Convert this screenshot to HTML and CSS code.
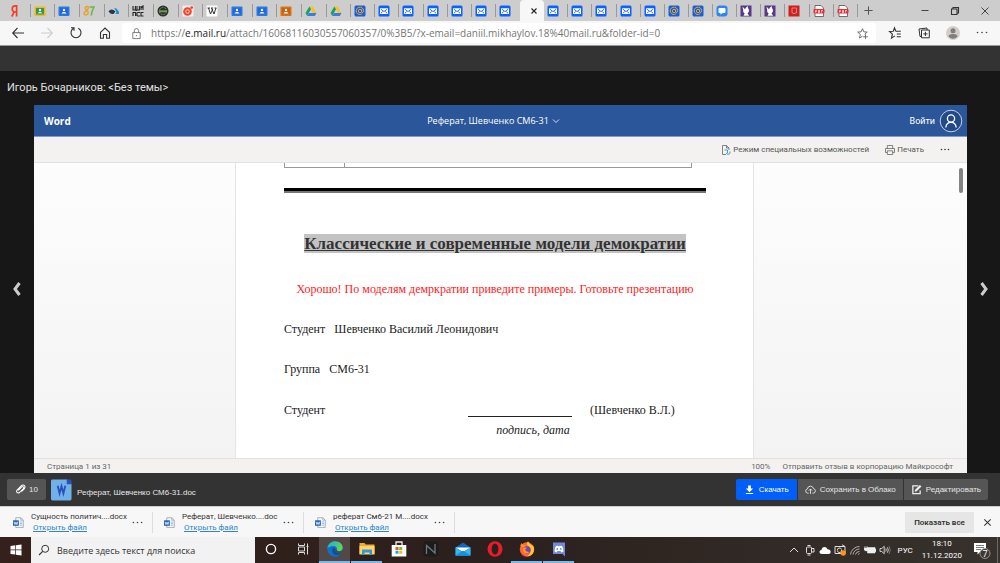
FILE: index.html
```html
<!DOCTYPE html>
<html lang="ru">
<head>
<meta charset="utf-8">
<title>Реферат, Шевченко СМ6-31</title>
<link rel="stylesheet" href="styles.css">
</head>
<body>
<svg class="sprite" aria-hidden="true">
  <symbol id="i-ya" viewBox="0 0 12 12"><path d="M7.600 11.500V.9H6.200C4.200.9 3.200 2.200 3.200 3.900c0 1.400.7 2.300 1.900 3L2.800 11.500M7.600 7H5.600" fill="none" stroke="#f33b2a" stroke-width="1.700"/></symbol>
  <symbol id="i-class-g" viewBox="0 0 12 12"><rect x=".5" y="1.500" width="11" height="9.500" rx="1" fill="#f4b912"/><rect x="2" y="3" width="8" height="6.500" fill="#2f9a56"/><circle cx="6" cy="5" r="1.200" fill="#fff"/><path d="M3.500 8.300q2.500-2.600 5 0z" fill="#fff"/></symbol>
  <symbol id="i-class-b" viewBox="0 0 12 12"><rect x=".5" y="1.500" width="11" height="9.500" rx="1" fill="#2a79e4"/><rect x="2" y="3" width="8" height="6.500" fill="#1f68dd"/><circle cx="6" cy="5" r="1.200" fill="#fff"/><path d="M3.300 8.400q2.700-2.900 5.400 0z" fill="#fff"/></symbol>
  <symbol id="i-class-o" viewBox="0 0 12 12"><rect x=".5" y="1.500" width="11" height="9.500" rx="1" fill="#dc7016"/><rect x="2" y="3" width="8" height="6.500" fill="#c9600c"/><circle cx="6" cy="5" r="1.200" fill="#fff"/><path d="M3.300 8.400q2.700-2.900 5.400 0z" fill="#fff"/></symbol>
  <symbol id="i-87" viewBox="0 0 12 12"><g fill="none" stroke-width="1.500"><path d="M5.600 2.200C4 .7 1.600 2 2.300 3.800c.5 1.200 2.800 1.700 2.900 3.800.1 2.400-4 3.300-4.200.8C.9 6.200 5.700 5.300 5.600 2.200z" stroke="#ef9f25"/><path d="M6.800 2H11C9.600 4.500 8.500 7 8.200 10.500" stroke="#66b645"/></g></symbol>
  <symbol id="i-steam" viewBox="0 0 12 12"><path d="M.5 6.500q2-3 5-1.500l2 1.500-2 2.500q-3 .5-5-2.500z" fill="#263747"/><path d="M6 3.500q3-1 3.500 1.500Q11.500 6 11 9H7.200Q10 7 6 3.500z" fill="#1c8ed0"/></symbol>
  <symbol id="i-cyr" viewBox="0 0 12 12"><g fill="none" stroke="#222" stroke-width="1.100"><path d="M1 1v4h2.400V1M3.400 5h.8v1M5 1v4h2.400V1M9 1v4M9 5V3l2-2v4M1 11V7.500h2.600V11M5 11V7.500M8 7.500H5.300M8 11H5.300M11.500 7.500H9V11h2.500"/></g></symbol>
  <symbol id="i-round" viewBox="0 0 12 12"><circle cx="6" cy="6" r="5.500" fill="#2c332e"/><circle cx="6" cy="6" r="3.600" fill="none" stroke="#8b9a86" stroke-width=".8" stroke-dasharray="2 1"/><path d="M2 6.300h8" stroke="#6fa047" stroke-width="2"/></symbol>
  <symbol id="i-red" viewBox="0 0 12 12"><rect x=".5" y=".5" width="11" height="11" rx="1" fill="#f7efed"/><circle cx="5.500" cy="6.500" r="4.300" fill="#f0442f"/><circle cx="5.500" cy="6.500" r="1.800" fill="none" stroke="#ffd7d0"/><circle cx="9.700" cy="2.600" r="1.400" fill="#f0442f"/></symbol>
  <symbol id="i-wiki" viewBox="0 0 12 12"><rect x=".5" y=".5" width="11" height="11" rx="1" fill="#fff"/><path d="M1.500 3H4M5 3h2.200M8.500 3h2M2.500 3l2 6L6.800 4M5.500 3l2.500 6 2-6" fill="none" stroke="#222" stroke-width=".9"/></symbol>
  <symbol id="i-drive" viewBox="0 0 12 12"><path d="M4.300 1.500h3.200L11.500 8H8.300z" fill="#fbc11e"/><path d="M4.300 1.500 6 4.300 2.200 11 .5 8z" fill="#18a25d"/><path d="M4 8h7.500L9.800 11H2.200z" fill="#397be8"/></symbol>
  <symbol id="i-at" viewBox="0 0 12 12"><rect x=".5" y=".5" width="11" height="11" rx="1.500" fill="#1260e5"/><g fill="none" stroke="#eaa422" stroke-width="1"><circle cx="6" cy="6" r="1.700"/><path d="M7.700 4.300v2.500q.2 1 1.100.8.900-.6.800-2a3.700 3.700 0 1 0-1.400 3.100"/></g></symbol>
  <symbol id="i-mail" viewBox="0 0 12 12"><rect x=".5" y=".5" width="11" height="11" rx="1.500" fill="#0a62ff"/><rect x="2" y="3.200" width="8" height="5.800" rx=".5" fill="#fff"/><path d="m3 4.300 3 2.300 3-2.300M3 8.200l1.800-1.700M9 8.200 7.200 6.500" fill="none" stroke="#0a62ff" stroke-width=".9"/></symbol>
  <symbol id="i-chat" viewBox="0 0 12 12"><rect x=".5" y=".5" width="11" height="11" rx="3" fill="#2787f5"/><path d="M3.500 3h5q1 0 1 1v3q0 1-1 1H6.500L4.500 9.800V8h-1q-1 0-1-1V4q0-1 1-1z" fill="#fff"/></symbol>
  <symbol id="i-bird" viewBox="0 0 12 12"><rect x=".5" y=".5" width="11" height="11" fill="#573987"/><path d="M2.500 2q1.800.8 2.500 2.500Q5.500 2 8 1q-.6 1.500.3 2.500Q10 6 7.500 8.500l1.700 2.200H3.500L4.700 8.500Q2.500 7 3.200 5z" fill="#fff"/></symbol>
  <symbol id="i-crest" viewBox="0 0 12 12"><rect x=".5" y=".5" width="11" height="11" fill="#d0201e"/><path d="M4 3h4.500v5H6.800L6 9l-.8-1H4z" fill="none" stroke="#f1a5a0" stroke-width=".7"/></symbol>
  <symbol id="i-pdf" viewBox="0 0 12 12"><path d="M2 .5h6l2.500 2.500v8.500H2z" fill="#fff" stroke="#554d4d" stroke-width=".8"/><rect x=".5" y="4" width="11" height="4.500" rx="1" fill="#ee2d35"/><path d="M2.500 7.500v-2h1v1h-1M5.500 7.500v-2h1v2zM8.500 7.500v-2H10" fill="none" stroke="#fff" stroke-width=".7"/></symbol>
  <symbol id="i-doc" viewBox="0 0 12 12"><path d="M3 .8h5.500l2.700 2.600v8H3z" fill="#f6f8fc" stroke="#93999f" stroke-width=".8"/><path d="M8.500.8v2.700h2.700M7.500 5.500H10M7.500 7.200H10M7.500 9H10" fill="none" stroke="#7da7df" stroke-width=".8"/><rect x="0" y="3.600" width="6.400" height="6" fill="#2862b9"/><path d="m1.200 5.200.9 3 1.100-2.600 1.100 2.600.9-3" fill="none" stroke="#fff" stroke-width=".8"/></symbol>
</svg>

<header class="browser">
  <div class="tabstrip">
    <nav class="tabs" aria-label="Вкладки">
      <button class="tab early"><svg><use href="#i-ya"/></svg></button>
      <button class="tab early"><svg><use href="#i-class-g"/></svg></button>
      <button class="tab early"><svg><use href="#i-class-b"/></svg></button>
      <button class="tab early"><svg><use href="#i-87"/></svg></button>
      <button class="tab early"><svg><use href="#i-steam"/></svg></button>
      <button class="tab early"><svg><use href="#i-cyr"/></svg></button>
      <button class="tab early"><svg><use href="#i-round"/></svg></button>
      <button class="tab early"><svg><use href="#i-red"/></svg></button>
      <button class="tab early"><svg><use href="#i-wiki"/></svg></button>
      <button class="tab early"><svg><use href="#i-class-b"/></svg></button>
      <button class="tab early"><svg><use href="#i-class-b"/></svg></button>
      <button class="tab early"><svg><use href="#i-class-o"/></svg></button>
      <button class="tab early"><svg><use href="#i-drive"/></svg></button>
      <button class="tab early"><svg><use href="#i-drive"/></svg></button>
      <button class="tab"><svg><use href="#i-at"/></svg></button>
      <button class="tab"><svg><use href="#i-mail"/></svg></button>
      <button class="tab"><svg><use href="#i-mail"/></svg></button>
      <button class="tab"><svg><use href="#i-mail"/></svg></button>
      <button class="tab"><svg><use href="#i-mail"/></svg></button>
      <button class="tab"><svg><use href="#i-mail"/></svg></button>
      <button class="tab last"><svg><use href="#i-mail"/></svg></button>
      <button class="tab active" aria-label="Закрыть вкладку"><svg viewBox="0 0 12 12"><path d="m3.500 3.500 5 5M8.500 3.500l-5 5" stroke="#222" stroke-width="1.100"/></svg></button>
      <button class="tab"><svg><use href="#i-mail"/></svg></button>
      <button class="tab"><svg><use href="#i-mail"/></svg></button>
      <button class="tab"><svg><use href="#i-mail"/></svg></button>
      <button class="tab"><svg><use href="#i-mail"/></svg></button>
      <button class="tab"><svg><use href="#i-mail"/></svg></button>
      <button class="tab"><svg><use href="#i-at"/></svg></button>
      <button class="tab"><svg><use href="#i-at"/></svg></button>
      <button class="tab"><svg><use href="#i-chat"/></svg></button>
      <button class="tab"><svg><use href="#i-bird"/></svg></button>
      <button class="tab"><svg><use href="#i-bird"/></svg></button>
      <button class="tab"><svg><use href="#i-crest"/></svg></button>
      <button class="tab"><svg><use href="#i-pdf"/></svg></button>
      <button class="tab"><svg><use href="#i-pdf"/></svg></button>
    </nav>
    <button class="newtab" aria-label="Новая вкладка"><svg viewBox="0 0 12 12"><path d="M6 1.500v9M1.500 6h9" stroke="#555" stroke-width="1.100"/></svg></button>
    <div class="winctl">
      <button aria-label="Свернуть"><svg viewBox="0 0 12 12"><path d="M2.500 5.500h7" stroke="#444"/></svg></button>
      <button aria-label="Развернуть"><svg viewBox="0 0 12 12"><path d="M2.500 4h5.500v5.500H2.500zM4 4V2.500h5.500V8H8" fill="none" stroke="#333" stroke-width="1.100"/></svg></button>
      <button aria-label="Закрыть"><svg viewBox="0 0 12 12"><path d="m2.500 2.500 7 7M9.500 2.500l-7 7" stroke="#444"/></svg></button>
    </div>
  </div>
  <div class="navbar">
    <button class="nav" aria-label="Назад"><svg viewBox="0 0 14 14"><path d="M13 7H2M6.500 2 1.700 7l4.800 5" fill="none" stroke="#333" stroke-width="1.100"/></svg></button>
    <button class="nav" aria-label="Вперёд"><svg viewBox="0 0 14 14"><path d="M1 7h11M7.500 2l4.800 5-4.800 5" fill="none" stroke="#ccc" stroke-width="1.100"/></svg></button>
    <button class="nav" aria-label="Обновить"><svg viewBox="0 0 14 14"><path d="M9.300 2.300A5 5 0 1 1 4.700 2.300M2 1.700h3v3" fill="none" stroke="#333" stroke-width="1.100"/></svg></button>
    <button class="nav" aria-label="Домой"><svg viewBox="0 0 14 14"><path d="M2.500 6.300 7 2l4.500 4.300v6H8.600V8.500H5.400v3.800H2.500z" fill="none" stroke="#333" stroke-width="1.100"/></svg></button>
    <div class="address">
      <svg viewBox="0 0 14 14"><path d="M3 6h8v6.500H3zM4.700 6V4a2.300 2.300 0 0 1 4.600 0v2" fill="none" stroke="#777"/><circle cx="7" cy="9.200" r=".7" fill="#777"/></svg>
      <div class="url">https://<b>e.mail.ru</b>/attach/16068116030557060357/0%3B5/?x-email=daniil.mikhaylov.18%40mail.ru&amp;folder-id=0</div>
      <svg viewBox="0 0 14 14"><path d="m7 1.800 1.400 3.400 3.700.3-2.800 2.400M7 9.900l-3.200 2 .9-3.900-2.900-2.500 3.700-.3L7 1.800M10.200 8v5M7.700 10.500h5" fill="none" stroke="#666"/></svg>
    </div>
    <button class="tool" aria-label="Избранное"><svg viewBox="0 0 14 14"><path d="M7.800 5.200h5M8.800 8h4M8.800 10.800h4M7 9.900l-3.500 2.200.9-4L1.500 5.500l3.800-.3L6.500 1.800l1.300 3.400" fill="none" stroke="#333" stroke-width="1.100"/></svg></button>
    <button class="tool" aria-label="Коллекции"><svg viewBox="0 0 14 14"><path d="M4.500 4h7.800v7.800H4.500zM8.400 5.800V10M6.300 7.900h4.200M10 4V2L2 3l1 7.500h1.500" fill="none" stroke="#333"/></svg></button>
    <button class="tool" aria-label="Профиль"><svg viewBox="0 0 14 14"><circle cx="7" cy="7" r="7" fill="#d2cfcb"/><circle cx="7" cy="4.700" r="2.500" fill="#827e7b"/><path d="M2.500 10.500Q2.500 8 7 8t4.500 2.500Q7 15 2.500 10.500z" fill="#827e7b"/></svg></button>
    <button class="tool" aria-label="Меню"><svg viewBox="0 0 14 14"><g fill="#444"><circle cx="2.500" cy="6.500" r=".8"/><circle cx="7" cy="6.500" r=".8"/><circle cx="11.500" cy="6.500" r=".8"/></g></svg></button>
  </div>
</header>

<main class="viewer">
  <h1 class="subject">Игорь Бочарников: &lt;Без темы&gt;</h1>
  <div class="stage">
    <button class="arrow" aria-label="Предыдущий"><svg viewBox="0 0 10 16"><path d="M7.500 2 3 8l4.500 6" fill="none" stroke="#ccc" stroke-width="3"/></svg></button>
    <section class="word">
      <div class="word-head">
        <strong>Word</strong>
        <button class="doc-name">Реферат, Шевченко СМ6-31 <svg viewBox="0 0 8 8"><path d="m1 2.500 3 3 3-3" fill="none" stroke="#fff" stroke-width=".8"/></svg></button>
        <button class="signin">Войти <svg viewBox="0 0 24 24"><circle cx="12" cy="12" r="10.800" fill="#224a87" stroke="#d5dfef" stroke-width=".9"/><circle cx="12" cy="9.500" r="3.600" fill="none" stroke="#fff" stroke-width="1.300"/><path d="M6.800 18.500q.5-5.200 5.200-5.200t5.200 5.200" fill="none" stroke="#fff" stroke-width="1.300"/></svg></button>
      </div>
      <div class="word-tools">
        <button><svg viewBox="0 0 10 10"><path d="M5 9.500H1.500v-9h4L8 3v2M5.500.5V3H8" fill="none" stroke="#666" stroke-width=".8"/><path d="M3.500 5h3v3M9 6.500q.8 2.500-2 3L5 8" fill="none" stroke="#3b9fd8"/></svg>Режим специальных возможностей</button>
        <button><svg viewBox="0 0 10 10"><path d="M2.300 7.500H.5V3.500h9v4H7.700M2.300 3.500v-3h5.400v3M2.300 5.800h5.400v3.700H2.300z" fill="none" stroke="#666" stroke-width=".8"/></svg>Печать</button>
        <button aria-label="Ещё"><svg viewBox="0 0 10 10"><g fill="#333"><circle cx="1.500" cy="4.500" r=".8"/><circle cx="5" cy="4.500" r=".8"/><circle cx="8.500" cy="4.500" r=".8"/></g></svg></button>
      </div>
      <div class="canvas">
        <article class="page">
          <div class="table-end"><span></span></div>
          <hr>
          <h2><span>Классические и современные модели демократии</span></h2>
          <p class="remark">Хорошо! По моделям демркратии приведите примеры. Готовьте презентацию</p>
          <p class="line"><span>Студент</span><span>Шевченко Василий Леонидович</span></p>
          <p class="line"><span>Группа</span><span>СМ6-31</span></p>
          <div class="sign"><span>Студент</span><span class="blank"></span><span>(Шевченко В.Л.)</span><i>подпись, дата</i></div>
        </article>
        <div class="scroll"><div class="thumb"></div></div>
      </div>
      <div class="word-status"><span>Страница 1 из 31</span><span class="zoom">100%</span><a href="#">Отправить отзыв в корпорацию Майкрософт</a></div>
    </section>
    <button class="arrow next" aria-label="Следующий"><svg viewBox="0 0 10 16"><path d="M2.500 2 7 8l-4.500 6" fill="none" stroke="#ccc" stroke-width="3"/></svg></button>
  </div>
</main>

<div class="filebar">
  <button class="count"><svg viewBox="0 0 12 12"><path d="m3.500 7 3.700-3.700q1.200-1 2 0 .8.900-.2 1.900L5.200 9Q3.500 10.500 2.200 9.200 1 8 2.500 6.300l4.200-4.200q2-1.700 3.600-.3 1.400 1.700-.3 3.500L7 8.300" fill="none" stroke="#fff" stroke-width="1.100"/></svg>10</button>
  <svg class="wicon" viewBox="0 0 22 22"><path d="M1.500 0H17l4.500 4.500v16q0 1.500-1.500 1.500H1.500Q0 22 0 20.500v-19Q0 0 1.500 0z" fill="#6fb1e8"/><path d="M16.500 0H20q1.500 0 1.500 1.500V5h-5z" fill="#2c4fc0"/><path d="m7 6.500 2 8 2-7.500 2 7.500 2-8" fill="none" stroke="#2c4fc0" stroke-width="1.900"/></svg>
  <span class="fname">Реферат, Шевченко СМ6-31.doc</span>
  <div class="actions">
    <button class="primary"><svg viewBox="0 0 12 12"><path d="M4.500 1.500h3V5H10L6 9 2 5h2.500zM2 9.800h8V11H2z" fill="#fff"/></svg>Скачать</button>
    <button><svg viewBox="0 0 12 12"><path d="M4 10H3Q.7 9.800.7 7.600.8 5.700 2.600 5.500 3 2.300 6 2.300q2.600 0 3.300 2.800 2 .3 2 2.500Q11.200 10 9 10H8M6 10.800V5.500M4.200 7.200 6 5.400l1.800 1.800" fill="none" stroke="#e5e5e5"/></svg>Сохранить в Облако</button>
    <button><svg viewBox="0 0 12 12"><path d="M8 2H2v8.500h8V7" fill="none" stroke="#eee" stroke-width="1.400"/><path d="m4 8.500.5-2.300L9.700 1l1.700 1.700-5.200 5.200z" fill="#eee"/></svg>Редактировать</button>
  </div>
</div>

<div class="downloads">
  <div class="dl"><svg><use href="#i-doc"/></svg><div><span>Сущность политич....docx</span><a href="#">Открыть файл</a></div><button aria-label="Ещё"><svg class="dots" viewBox="0 0 12 12"><g fill="#444"><circle cx="1.500" cy="6" r=".9"/><circle cx="6" cy="6" r=".9"/><circle cx="10.500" cy="6" r=".9"/></g></svg></button></div>
  <div class="dl"><svg><use href="#i-doc"/></svg><div><span>Реферат, Шевченко....doc</span><a href="#">Открыть файл</a></div><button aria-label="Ещё"><svg class="dots" viewBox="0 0 12 12"><g fill="#444"><circle cx="1.500" cy="6" r=".9"/><circle cx="6" cy="6" r=".9"/><circle cx="10.500" cy="6" r=".9"/></g></svg></button></div>
  <div class="dl"><svg><use href="#i-doc"/></svg><div><span>реферат См6-21 М....docx</span><a href="#">Открыть файл</a></div><button aria-label="Ещё"><svg class="dots" viewBox="0 0 12 12"><g fill="#444"><circle cx="1.500" cy="6" r=".9"/><circle cx="6" cy="6" r=".9"/><circle cx="10.500" cy="6" r=".9"/></g></svg></button></div>
  <button class="showall">Показать все</button>
  <button class="dlclose" aria-label="Закрыть"><svg viewBox="0 0 12 12"><path d="m2.500 2.500 7 7M9.500 2.500l-7 7" stroke="#333" stroke-width="1.100"/></svg></button>
</div>

<footer class="taskbar">
  <button class="start" aria-label="Пуск"><svg viewBox="0 0 12 12"><path d="M.5 2 5.300 1.300v4.300H.5zM6 1.200 11.500.5v5.100H6zM.5 6.300h4.800v4.300L.5 10zM6 6.300h5.500v5.200L6 10.800z" fill="#fff"/></svg></button>
  <label class="search"><svg viewBox="0 0 12 12"><circle cx="7.200" cy="4.800" r="3.500" fill="none" stroke="#333"/><path d="M4.700 7.300 1 11" stroke="#333" stroke-width="1.100"/></svg><input type="text" placeholder="Введите здесь текст для поиска" aria-label="Поиск"></label>
  <div class="apps">
    <button aria-label="Кортана"><svg viewBox="0 0 16 16"><circle cx="8" cy="8" r="4.600" fill="none" stroke="#fff" stroke-width="1.400"/></svg></button>
    <button aria-label="Просмотр задач"><svg viewBox="0 0 16 16"><path d="M3.500 2.500v2h6v-2M3.500 13.500v-2h6v2M3.500 6h6v4h-6zM12.500 2.500v11M11.500 5.500h2" fill="none" stroke="#ddd"/></svg></button>
    <button class="open current" aria-label="Edge"><svg viewBox="0 0 16 16"><defs><linearGradient id="eg" x2="1" y2=".4"><stop offset="0" stop-color="#1fa9e4"/><stop offset="1" stop-color="#62d454"/></linearGradient></defs><circle cx="8" cy="8" r="7.700" fill="#126fc6"/><path d="M.4 7.500C1 2.500 4.500.3 8 .3c4.500 0 7.700 3 7.700 6.200 0 2.500-2 3.800-4.200 3.800-1.700 0-2.300-.8-1.500-1.500C10.500 7 9 5 6.400 5 3.200 5 1 6.500.4 7.500z" fill="url(#eg)"/><path d="M6.500 6.500C4 9 5.500 14.500 10.500 14c2 0 3.500-1.200 4-2.300-3 1.300-6.500.2-6-2.200q.2-2-2-3z" fill="#144c91"/><path d="M8.600 9q-.5 2.500 2.800 2.900 1.700.2 3.200-.5l1.200 1.100V9.500q-2 1.200-4.300.8-1.700 0-1.500-1.500z" fill="#514643"/></svg></button>
    <button class="open" aria-label="Проводник"><svg viewBox="0 0 16 16"><path d="M.5 2h5l1.300 1.500h8.700V13H.5z" fill="#efac2f"/><path d="M.5 5h15v8.500H.5z" fill="#ffd767"/><path d="M3 14V8.500h10V14h-2.500v-2.500h-5V14z" fill="#3597db"/></svg></button>
    <button aria-label="Магазин"><svg viewBox="0 0 16 16"><path d="M5 4V1h6v3" fill="none" stroke="#eee" stroke-width="1.300"/><path d="M.7 4h14.600v11.500H.7z" fill="#fff"/><path fill="#ef5327" d="M4.500 6h3v3h-3z"/><path fill="#80b928" d="M8.200 6h3v3h-3z"/><path fill="#19a5e7" d="M4.500 9.700h3v3h-3z"/><path fill="#f9b915" d="M8.200 9.700h3v3h-3z"/></svg></button>
    <button aria-label="N"><svg viewBox="0 0 16 16"><rect x=".5" y=".5" width="15" height="15" rx="2" fill="#1b1c1e"/><path d="M3.500 13V4.500L12 12V3" fill="none" stroke="#74777a" stroke-width="1.300"/></svg></button>
    <button aria-label="Почта"><svg viewBox="0 0 16 16"><path d="M.5 6.500 8 1.500l7.500 5v8H.5z" fill="#1068ba"/><path d="M.5 6.500h15L8 11z" fill="#fff"/><path d="m.5 6.500 7.500 4.500 7.500-4.500v8H.5z" fill="#35b7f0"/><path d="m.5 14.500 7.500-5 7.500 5z" fill="#1791e0"/></svg></button>
    <button aria-label="Opera"><svg viewBox="0 0 16 16"><ellipse cx="8" cy="8" rx="7.500" ry="7.700" fill="#e81c2b"/><ellipse cx="8" cy="8" rx="3.400" ry="5.600" fill="#2c201d"/></svg></button>
    <button class="open" aria-label="Firefox"><svg viewBox="0 0 16 16"><circle cx="8" cy="8.500" r="7.200" fill="#ff6c28"/><path d="M9 .3q1 2.400 4 4.200l1.300.3q1.500 3.700.3 6.200-2 4-6.200 4.500Q13 11 11.500 7.500 10 5 8 4 7.500 2 9 .3z" fill="#ffc829"/><path d="M1.200 5 2.500 2l1.300 2 3 .5-1.500 2z" fill="#ff9132"/><circle cx="8" cy="8.800" r="3.600" fill="#7440c4"/><path d="M1 8q1 6 7 7.700Q1 15.500 1 8z" fill="#ed2c65"/><path d="M4 7.500q2-1.500 4-.5L6 8.500q1 3 4.500 2.300Q8 13.500 5 11.500 3.500 10 4 7.500z" fill="#ff9a25"/></svg></button>
    <button class="open" aria-label="Discord"><svg viewBox="0 0 16 16"><path d="M2 1.500h12v14L11.500 13H2z" fill="#7289da"/><path d="M3.500 10.500q0-4 1.500-5.500l2-.3.300.6h1.400l.3-.6 2 .3q1.500 1.500 1.500 5.500L10.500 11.500 9.500 10h-3l-1 1.500z" fill="#fff"/><circle cx="6.300" cy="8" r=".9" fill="#7289da"/><circle cx="9.700" cy="8" r=".9" fill="#7289da"/></svg></button>
  </div>
  <div class="tray">
    <svg class="more" viewBox="0 0 12 12"><path d="m2 8 4-4 4 4" fill="none" stroke="#ddd"/></svg>
    <svg viewBox="0 0 12 12"><rect x="2.500" y="3" width="5" height="6.500" rx="1" fill="none" stroke="#ddd"/><path d="M3.500 1.500h3M3.500 11h3M8 4.500h2v3.500H8" fill="none" stroke="#ddd"/></svg>
    <svg viewBox="0 0 12 12"><path d="M3 10Q.4 10 .4 8q.2-2 2-2Q3 3 5.500 3q2 0 3 2.200Q11.600 5.500 11.700 8q-.1 2-2 2z" fill="#fff"/></svg>
    <svg viewBox="0 0 12 12"><path d="M1 2.500h10v7H1zM8 .8l3 1.700M3.500 6.500a2 2 0 0 1 4-1M7.500 6a2 2 0 0 1-4 1" fill="none" stroke="#ddd"/><circle cx="9.200" cy="9" r="2.700" fill="#ff9413"/></svg>
    <svg viewBox="0 0 12 12"><path d="M1.500 10.500a9 9 0 0 1 9-8M4 10.500a6.500 6.500 0 0 1 6.500-5.500M6.500 10.500a4 4 0 0 1 4-3M9 10.500l1.500-1" fill="none" stroke="#bbb" stroke-width=".9"/></svg>
    <svg viewBox="0 0 12 12"><path d="M3.500 3.500H11v5.500H3.500zM11 5h1v2.500h-1zM1 2v2.200M3 2v2.200M0 4h4v1.500L2.500 7h-1L0 5.500z" fill="#eee" stroke="#eee" stroke-width=".6"/></svg>
    <svg viewBox="0 0 12 12"><path d="M1 4.500h1.800L5.200 2.300v7.400L2.800 7.500H1zM6.800 4.500q1 1.500 0 3M8.400 3.300q1.800 2.700 0 5.400" fill="none" stroke="#ddd" stroke-width=".9"/><path d="M10 2q2.500 4 0 8" fill="none" stroke="#777"/></svg>
    <span class="lang">РУС</span>
    <time><span>18:10</span><span>11.12.2020</span></time>
    <svg class="notif" viewBox="0 0 18 18"><path d="M1 2h12v9H7l-2.500 2.500V11H1z" fill="#fff"/><path d="M3 4.500h8M3 6.500h8M3 8.500h5" stroke="#555" stroke-width=".8"/><circle cx="12" cy="12.500" r="5" fill="#3c3835" stroke="#aaa" stroke-width=".8"/><text x="12" y="15.500" text-anchor="middle" class="badge">7</text></svg>
  </div>
  <button class="desktop" aria-label="Показать рабочий стол"></button>
</footer>
</body>
</html>
```
FILE: styles.css
```css
* { box-sizing: border-box; }
body {
  margin: 0;
  height: 100vh;
  display: flex;
  flex-direction: column;
  overflow: hidden;
  background: #171717;
  font-family: "Open Sans", "Noto Sans", sans-serif;
  font-size: 9px;
  color: #333;
}
button {
  border: 0;
  margin: 0;
  padding: 0;
  background: none;
  font: inherit;
  color: inherit;
  display: flex;
  align-items: center;
  justify-content: center;
  white-space: nowrap;
}
svg { flex: none; display: block; }
.sprite { position: absolute; width: 0; height: 0; }

/* browser chrome */
.tabstrip { height: 21px; display: flex; background: #cdcdcd; padding-left: 6px; }
.tabs { flex: 1; display: flex; }
.tab {
  flex: 40 1 0;
  justify-content: flex-start;
  padding: 0 0 0 3px;
  background: linear-gradient(#999, #999) right center / 1px 13px no-repeat;
}
.tab.early { flex-grow: 41; }
.tab svg { width: 12px; height: 12px; }
.tab.last { background: none; }
.tab.active { background: #f7f7f7; border-radius: 4px 4px 0 0; justify-content: center; }
.newtab { width: 21px; }
.newtab svg { width: 11px; height: 11px; }
.winctl { margin-left: 31px; display: flex; }
.winctl button { width: 30px; }
.winctl svg { width: 12px; height: 12px; }

.navbar {
  height: 25px;
  display: flex;
  align-items: center;
  background: #f7f7f7;
  border-bottom: 1px solid #999;
  padding: 0 4px 0 3px;
}
.nav { width: 29px; }
.nav svg, .tool svg { width: 14px; height: 14px; }
.address {
  flex: 1;
  height: 20px;
  margin: 0 4px 0 3px;
  padding: 0 7px 0 8px;
  display: flex;
  align-items: center;
  background: #fff;
  border-radius: 3px;
}
.address svg { width: 13px; height: 13px; }
.url { flex: 1; margin-left: 8px; font-size: 10px; color: #767676; white-space: nowrap; }
.url b { font-weight: 400; color: #222; }
.tool { width: 29px; }

/* attachment viewer */
.viewer {
  flex: 1;
  min-height: 0;
  display: flex;
  flex-direction: column;
  border-top: 25px solid #333;
}
.subject {
  margin: 0;
  padding: 0 7px;
  font: 400 11px/34px Roboto, "Liberation Sans", sans-serif;
  color: #e0e0e0;
}
.stage { flex: 1; min-height: 0; display: flex; }
.arrow { width: 34px; }
.arrow.next { width: 33px; }
.arrow svg { width: 10px; height: 16px; }
.word { flex: 1; min-width: 0; display: flex; flex-direction: column; background: #f3f2f1; }
.word-head {
  height: 32px;
  display: grid;
  grid-template-columns: 1fr auto 1fr;
  align-items: center;
  padding: 0 4px 0 10px;
  background: #2b579a;
  border-bottom: 1px solid #7f9bc6;
  color: #fff;
}
.word-head strong { font-size: 10px; font-weight: 700; }
.doc-name { gap: 3px; margin-right: 20px; }
.doc-name svg { width: 8px; height: 8px; }
.signin { justify-self: end; gap: 4px; font-family: Roboto, "Open Sans", sans-serif; }
.signin svg { width: 24px; height: 24px; }
.word-tools {
  height: 26px;
  display: flex;
  justify-content: flex-end;
  gap: 16px;
  padding-right: 17px;
  border-bottom: 1px solid #e3e2e1;
  font-family: Roboto, "Open Sans", sans-serif;
  font-size: 8px;
  color: #555;
}
.word-tools button { gap: 2px; }
.word-tools svg { width: 10px; height: 10px; }
.canvas {
  flex: 1;
  min-height: 0;
  overflow: hidden;
  display: flex;
  background: linear-gradient(#fdfdfd, #f3f3f3);
}
.page {
  width: 519px;
  margin: 0 auto;
  padding: 0 47px 0 48px;
  background: #fff;
  border: solid #e4e4e4;
  border-width: 0 1px;
  font: 12px/16px "Liberation Serif", "Times New Roman", serif;
  color: #222;
}
.table-end {
  height: 5px;
  width: 408px;
  border: 1px solid #999;
  border-top: 0;
}
.table-end span { display: block; width: 60px; height: 4px; border-right: 1px solid #999; }
.page hr { height: 5px; margin: 20px 0 0; border: 0; background: #000; border-bottom: 2px solid #777; }
.page h2 { margin: 41px 0 0; font-size: 17px; line-height: 20px; text-align: center; white-space: nowrap; }
.page h2 span { background: #c3c3c3; text-decoration: underline; color: #333; }
.remark { margin: 27px 0 0; color: #ff1a1a; text-align: center; white-space: nowrap; }
.line { margin: 24px 0 0; display: flex; gap: 9px; }
.sign {
  margin-top: 25px;
  display: grid;
  grid-template-columns: 184px 104px auto;
  row-gap: 4px;
}
.sign .blank { border-bottom: 1px solid #222; height: 15px; }
.sign span:nth-child(3) { padding-left: 18px; }
.sign i { grid-column: 2; justify-self: center; margin-left: 26px; white-space: nowrap; }
.scroll { width: 12px; padding: 5px 4px 0; }
.thumb { height: 25px; border-radius: 2px; background: #848484; }
.word-status {
  height: 15px;
  display: flex;
  align-items: center;
  gap: 12px;
  padding: 0 14px 0 13px;
  border-top: 1px solid #e1e1e1;
  font-family: Roboto, "Open Sans", sans-serif;
  font-size: 8px;
  color: #666;
}
.word-status .zoom { margin-left: auto; }
.word-status a { color: inherit; text-decoration: none; }

/* attachment actions */
.filebar {
  height: 33px;
  display: flex;
  align-items: center;
  padding: 0 12px 0 7px;
  background: #333;
  font-family: "Liberation Sans", Arial, sans-serif;
  font-size: 8px;
  color: #e6e6e6;
}
.count { width: 39px; height: 21px; gap: 3px; border-radius: 2px; background: #555; }
.count svg { width: 11px; height: 11px; }
.wicon { width: 21px; height: 22px; margin-left: 5px; }
.fname { margin: 5px 0 0 5px; }
.actions { margin-left: auto; display: flex; gap: 1px; border-radius: 2px; overflow: hidden; }
.actions button { height: 21px; padding: 0 7px; gap: 4px; background: #555; }
.actions .primary { padding: 0 8px; background: #005ff9; color: #fff; }
.actions svg { width: 11px; height: 11px; }

/* downloads */
.downloads {
  height: 31px;
  display: flex;
  align-items: center;
  background: #f7f7f7;
  border-top: 1px solid #ccc;
  font-family: Roboto, "Open Sans", sans-serif;
  font-size: 8px;
}
.dl {
  width: 151px;
  height: 21px;
  display: flex;
  align-items: center;
  padding: 0 9px 0 11px;
  border-right: 1px solid #ddd;
  line-height: 11px;
  white-space: nowrap;
}
.dl:first-child { width: 153px; padding-left: 13px; }
.dl svg { width: 11px; height: 11px; margin-right: 7px; }
.dl svg.dots { margin: 0; }
.dl div { flex: 1; display: flex; flex-direction: column; align-items: flex-start; }
.dl a { margin-left: 2px; color: #2b85cc; }
.showall { width: 69px; height: 21px; margin-left: auto; background: #e6e6e6; font-weight: 600; }
.dlclose { width: 26px; }
.dlclose svg { width: 11px; height: 11px; }

/* taskbar */
.taskbar { height: 26px; display: flex; background: linear-gradient(90deg, #35201b, #2b201d 50%, #37322d); color: #fff; }
.start { width: 31px; }
.start svg { width: 12px; height: 12px; }
.search { width: 224px; display: flex; align-items: center; padding-left: 7px; background: #f2f2f2; }
.search svg { width: 12px; height: 12px; }
.search input {
  flex: 1;
  min-width: 0;
  margin-left: 7px;
  padding: 0;
  border: 0;
  background: none;
  font: 9px "Open Sans", "Noto Sans", sans-serif;
}
.search input::placeholder { color: #333; opacity: 1; }
.apps { display: flex; gap: 1px; }
.apps button { width: 31px; border-bottom: 2px solid transparent; }
.apps svg { width: 16px; height: 16px; }
.apps .open { border-bottom-color: #76b9ed; }
.apps .current { background: #544846; }
.tray {
  margin-left: auto;
  display: flex;
  align-items: center;
  gap: 3px;
  padding-right: 6px;
  font-family: Roboto, "Open Sans", sans-serif;
  font-size: 8px;
}
.tray svg { width: 12px; height: 12px; }
.tray .more { margin-right: 1px; }
.tray .lang { margin-left: 4px; }
.tray time { display: flex; flex-direction: column; align-items: center; margin-left: 6px; line-height: 12px; }
.tray .notif { width: 18px; height: 18px; margin-left: 8px; }
.badge { font: 9px "Open Sans", sans-serif; fill: #fff; }
.desktop { width: 3px; border-left: 1px solid #6b6763; }
```
